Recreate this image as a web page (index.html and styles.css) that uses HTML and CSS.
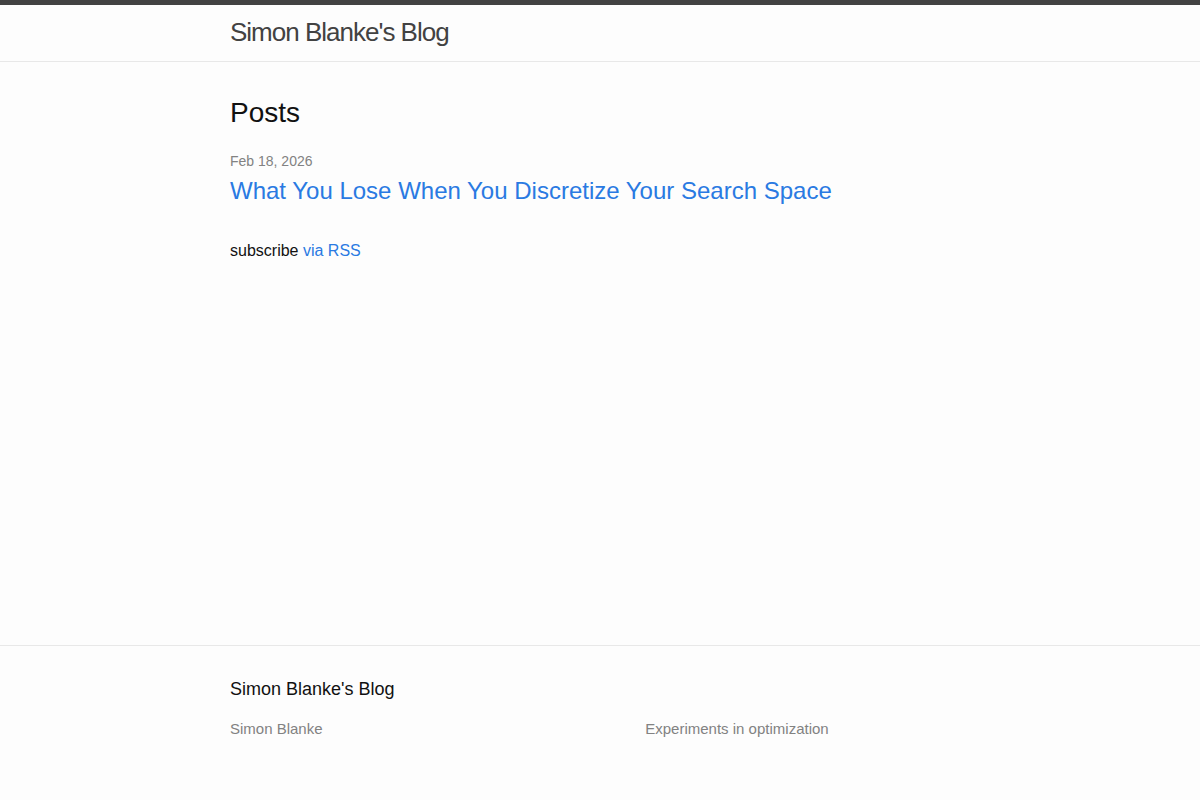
FILE: index.html
```html
<!DOCTYPE html>
<html lang="en">
<head>
    <meta charset="UTF-8">
    <title>Simon Blanke's Blog</title>
    <link rel="stylesheet" href="styles.css">
</head>
<body>
    <header class="site-header">
        <div class="wrapper">
            <a class="site-title" href="#">Simon Blanke's Blog</a>
        </div>
    </header>
    <main class="page-content">
        <div class="wrapper">
            <h2 class="post-list-heading">Posts</h2>
            <ul class="post-list">
                <li>
                    <span class="post-meta">Feb 18, 2026</span>
                    <h3>
                        <a class="post-link" href="#">What You Lose When You Discretize Your Search Space</a>
                    </h3>
                </li>
            </ul>
            <p class="rss-subscribe">subscribe <a href="#">via RSS</a></p>
        </div>
    </main>
    <footer class="site-footer">
        <div class="wrapper">
            <h2 class="footer-heading">Simon Blanke's Blog</h2>
            <div class="footer-col-wrapper">
                <div class="footer-col footer-col-1">
                    <p>Simon Blanke</p>
                </div>
                <div class="footer-col footer-col-2">
                    <p>Experiments in optimization</p>
                </div>
            </div>
        </div>
    </footer>
</body>
</html>
```

FILE: styles.css
```css
body, h1, h2, h3, p, ul {
    margin: 0;
    padding: 0;
}
body {
    font: 400 16px/1.5 "Liberation Sans", Arial, sans-serif;
    color: #111;
    background-color: #fdfdfd;
    display: flex;
    flex-direction: column;
    min-height: 100vh;
}
a {
    color: #2a7ae2;
    text-decoration: none;
}
.wrapper {
    max-width: 740px;
    margin: 0 auto;
    padding: 0 30px;
}
.site-header {
    border-top: 5px solid #424242;
    border-bottom: 1px solid #e8e8e8;
    min-height: 55.95px;
}
.site-title {
    font-size: 26px;
    font-weight: 300;
    line-height: 54px;
    letter-spacing: -1px;
    color: #424242;
}
.page-content {
    padding: 30px 0;
    flex: 1;
}
.post-list-heading {
    font-size: 28px;
    font-weight: 400;
    margin-bottom: 15px;
}
.post-list {
    list-style: none;
}
.post-list > li {
    margin-bottom: 30px;
}
.post-meta {
    font-size: 14px;
    color: #828282;
}
.post-list h3 {
    font-weight: 400;
}
.post-link {
    display: block;
    font-size: 24px;
}
.site-footer {
    border-top: 1px solid #e8e8e8;
    padding: 30px 0;
}
.footer-heading {
    font-size: 18px;
    font-weight: 400;
    margin-bottom: 15px;
}
.footer-col-wrapper {
    display: flex;
    font-size: 15px;
    color: #828282;
    margin-left: -15px;
}
.footer-col {
    padding-left: 15px;
    margin-bottom: 15px;
}
.footer-col p {
    margin-bottom: 15px;
}
.footer-col-1 {
    width: calc(55% - 15px);
}
.footer-col-2 {
    width: calc(45% - 15px);
}
```
